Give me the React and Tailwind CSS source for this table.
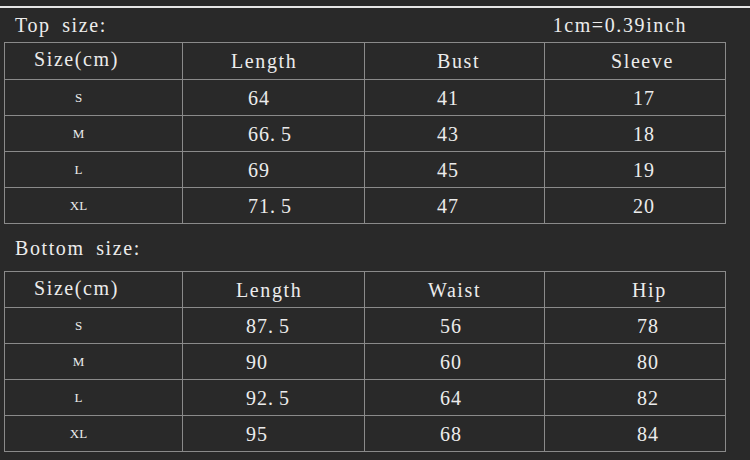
const top = {
  headers: ['Length', 'Bust', 'Sleeve'],
  headPad: ['pl-[48px]', 'pl-[72px]', 'pl-[66px]'],
  valPad: ['pl-[65px]', 'pl-[72px]', 'pl-[88px]'],
  rows: [
    ['S', '64', '41', '17'],
    ['M', '66.5', '43', '18'],
    ['L', '69', '45', '19'],
    ['XL', '71.5', '47', '20'],
  ],
};

const bottom = {
  headers: ['Length', 'Waist', 'Hip'],
  headPad: ['pl-[53px]', 'pl-[63px]', 'pl-[87px]'],
  valPad: ['pl-[63px]', 'pl-[75px]', 'pl-[92px]'],
  rows: [
    ['S', '87.5', '56', '78'],
    ['M', '90', '60', '80'],
    ['L', '92.5', '64', '82'],
    ['XL', '95', '68', '84'],
  ],
};

// labels: light serif with wide tracking, like SimSun's half-width latin
const label = "font-['Liberation_Serif','Noto_Sans_CJK_SC',serif] text-[20px] tracking-[1.6px] [word-spacing:5px]";
const serif = "font-['Liberation_Serif',serif]";
const cols = 'grid grid-cols-[178px_182px_180px_181px]';
const cell = 'border-r border-b border-[#8a8a8a] flex items-center';

function Num({ v }) {
  const [a, b] = v.split('.');
  if (b === undefined) return <span>{v}</span>;
  return (
    <span>
      {a}
      <span className="mr-[5px]">.</span>
      {b}
    </span>
  );
}

function SizeTable({ data, headH }) {
  return (
    <div className="ml-[4px] w-[722px] border-l border-t border-[#8a8a8a]">
      <div className={`${cols} ${headH}`}>
        <div className={`${cell} pl-[29px] pb-[4px] ${label}`}>Size(cm)</div>
        {data.headers.map((h, i) => (
          <div key={h} className={`${cell} ${data.headPad[i]} ${label}`}>
            {h}
          </div>
        ))}
      </div>
      {data.rows.map((r) => (
        <div key={r[0]} className={`${cols} h-[36px]`}>
          <div className={`${cell} justify-center pr-[30px] text-[13px] ${serif}`}>{r[0]}</div>
          {r.slice(1).map((v, i) => (
            <div key={i} className={`${cell} ${data.valPad[i]} text-[20px] tracking-[1px] ${serif}`}>
              <Num v={v} />
            </div>
          ))}
        </div>
      ))}
    </div>
  );
}

export default function App() {
  return (
    <div className="w-[750px] h-[460px] bg-[#292929] text-[#ececec] overflow-hidden">
      <div className="pt-[6px]">
        <div className="h-[2px] bg-[#e6e6e6]" />
      </div>
      <div className={`h-[34px] flex items-center justify-between ${label}`}>
        <span className="pl-[15px]">Top size:</span>
        <span className="pr-[63px]">1cm=0.39inch</span>
      </div>
      <SizeTable data={top} headH="h-[37px]" />
      <div className={`h-[47px] flex items-center pl-[15px] ${label}`}>Bottom size:</div>
      <SizeTable data={bottom} headH="h-[36px]" />
    </div>
  );
}
